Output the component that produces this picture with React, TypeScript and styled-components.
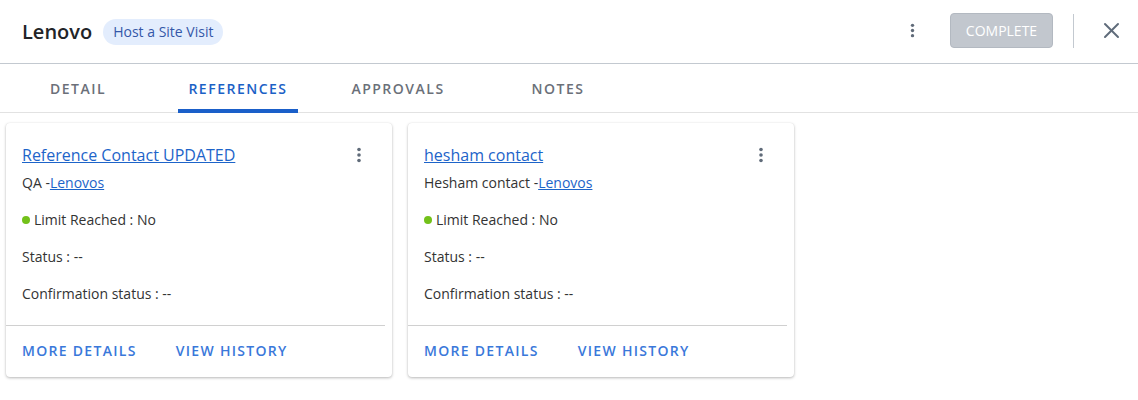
import React from 'react';
import styled, { createGlobalStyle } from 'styled-components';

interface Reference {
  name: string;
  role: string;
  company: string;
  limitReached: string;
  status: string;
  confirmation: string;
}

const references: Reference[] = [
  {
    name: 'Reference Contact UPDATED',
    role: 'QA',
    company: 'Lenovos',
    limitReached: 'No',
    status: '--',
    confirmation: '--',
  },
  {
    name: 'hesham contact',
    role: 'Hesham contact',
    company: 'Lenovos',
    limitReached: 'No',
    status: '--',
    confirmation: '--',
  },
];

const tabs = ['DETAIL', 'REFERENCES', 'APPROVALS', 'NOTES'];

const GlobalStyle = createGlobalStyle`
  html, body {
    margin: 0;
    padding: 0;
    background: #ffffff;
    font-family: 'Open Sans', 'Noto Sans', sans-serif;
    color: #333333;
  }
`;

function KebabIcon({ size = 16 }: { size?: number }): JSX.Element {
  return (
    <svg width={size} height={size} viewBox="0 0 16 16" fill="#606b79">
      <circle cx="8" cy="2.5" r="1.8" />
      <circle cx="8" cy="8" r="1.8" />
      <circle cx="8" cy="13.5" r="1.8" />
    </svg>
  );
}

function CloseIcon(): JSX.Element {
  return (
    <svg width="17" height="17" viewBox="0 0 17 17" stroke="#5f6b7a" strokeWidth="2" strokeLinecap="round">
      <line x1="2" y1="2" x2="15" y2="15" />
      <line x1="15" y1="2" x2="2" y2="15" />
    </svg>
  );
}

function ReferenceCard({ item }: { item: Reference }): JSX.Element {
  return (
    <Card>
      <CardBody>
        <TitleRow>
          <TitleLink href="#">{item.name}</TitleLink>
          <IconButton>
            <KebabIcon size={16} />
          </IconButton>
        </TitleRow>
        <Subtitle>
          {item.role} -<InlineLink href="#">{item.company}</InlineLink>
        </Subtitle>
        <InfoRow>
          <Dot />
          Limit Reached : {item.limitReached}
        </InfoRow>
        <InfoRow>Status : {item.status}</InfoRow>
        <InfoRow>Confirmation status : {item.confirmation}</InfoRow>
      </CardBody>
      <Divider />
      <CardFooter>
        <TextButton>MORE DETAILS</TextButton>
        <TextButton>VIEW HISTORY</TextButton>
      </CardFooter>
    </Card>
  );
}

export default function App(): JSX.Element {
  return (
    <Page>
      <GlobalStyle />
      <Header>
        <TitleGroup>
          <PageTitle>Lenovo</PageTitle>
          <Badge>Host a Site Visit</Badge>
        </TitleGroup>
        <Actions>
          <IconButton>
            <KebabIcon size={15} />
          </IconButton>
          <CompleteButton disabled>COMPLETE</CompleteButton>
          <VerticalRule />
          <IconButton>
            <CloseIcon />
          </IconButton>
        </Actions>
      </Header>
      <TabBar>
        {tabs.map((t) => (
          <Tab key={t} $active={t === 'REFERENCES'}>
            {t}
            {t === 'REFERENCES' && <Indicator />}
          </Tab>
        ))}
      </TabBar>
      <CardGrid>
        {references.map((r) => (
          <ReferenceCard key={r.name} item={r} />
        ))}
      </CardGrid>
    </Page>
  );
}

const Page = styled.div`
  width: 1138px;
  height: 400px;
  background: #ffffff;
`;

const Header = styled.header`
  height: 64px;
  box-sizing: border-box;
  border-bottom: 1px solid #c3c9d0;
  display: flex;
  align-items: center;
  justify-content: space-between;
  padding: 0 18px 0 22px;
`;

const TitleGroup = styled.div`
  display: flex;
  align-items: center;
  gap: 11px;
`;

const PageTitle = styled.h1`
  margin: 0;
  font-size: 20px;
  font-weight: 600;
  color: #222428;
`;

const Badge = styled.span`
  display: inline-flex;
  align-items: center;
  height: 26px;
  padding: 0 10px;
  border-radius: 13px;
  background: #e3edfd;
  color: #3457a8;
  font-size: 14px;
`;

const Actions = styled.div`
  display: flex;
  align-items: center;
  margin-top: -2px;
`;

const IconButton = styled.button`
  border: none;
  background: transparent;
  padding: 0;
  cursor: pointer;
  display: inline-flex;
  align-items: center;
  justify-content: center;
`;

const CompleteButton = styled.button`
  margin-left: 30px;
  width: 103px;
  height: 35px;
  border: 1px solid #b3b9c1;
  border-radius: 4px;
  background: #c2c7ce;
  color: #ffffff;
  font-family: 'Open Sans', sans-serif;
  font-size: 14px;
  padding: 0;
`;

const VerticalRule = styled.div`
  width: 1px;
  height: 34px;
  background: #c3c9d0;
  margin: 0 29px 0 20px;
`;

const TabBar = styled.nav`
  height: 49px;
  box-sizing: border-box;
  border-bottom: 1px solid #e2e2e2;
  display: flex;
  gap: 4px;
`;

const Tab = styled.div<{ $active?: boolean }>`
  position: relative;
  width: 156px;
  display: flex;
  align-items: center;
  justify-content: center;
  font-size: 14px;
  font-weight: 600;
  letter-spacing: 1.5px;
  color: ${(p) => (p.$active ? '#1b61c6' : '#6b7079')};
`;

const Indicator = styled.span`
  position: absolute;
  bottom: -1px;
  left: 50%;
  transform: translateX(-50%);
  width: 120px;
  height: 4px;
  background: #1a5fc9;
`;

const CardGrid = styled.div`
  display: flex;
  gap: 16px;
  padding: 10px 6px;
`;

const Card = styled.div`
  width: 386px;
  background: #ffffff;
  border-radius: 4px;
  box-shadow: 0 1px 3px rgba(0, 0, 0, 0.28), 0 0 1px rgba(0, 0, 0, 0.08);
`;

const CardBody = styled.div`
  padding: 20px 16px 21px 16px;
`;

const TitleRow = styled.div`
  display: flex;
  align-items: center;
  justify-content: space-between;
  height: 24px;
  padding-right: 9px;
`;

const TitleLink = styled.a`
  font-size: 16px;
  color: #1d64c9;
  text-decoration: underline;
`;

const Subtitle = styled.div`
  margin-top: 6px;
  font-size: 14px;
  line-height: 20px;
  color: #333333;
`;

const InlineLink = styled.a`
  color: #1d64c9;
  text-decoration: underline;
`;

const InfoRow = styled.div`
  margin-top: 17px;
  display: flex;
  align-items: center;
  font-size: 14px;
  line-height: 20px;
  color: #333333;
`;

const Dot = styled.span`
  width: 8px;
  height: 8px;
  border-radius: 50%;
  background: #73c11a;
  margin-right: 4px;
`;

const Divider = styled.div`
  height: 1px;
  background: #d0d0d0;
  margin-right: 7px;
`;

const CardFooter = styled.div`
  height: 51px;
  box-sizing: border-box;
  display: flex;
  align-items: center;
  gap: 39px;
  padding: 0 16px 2px 16px;
`;

const TextButton = styled.button`
  border: none;
  background: transparent;
  padding: 0;
  font-family: 'Open Sans', sans-serif;
  font-size: 14px;
  font-weight: 600;
  letter-spacing: 1.3px;
  color: #3a78da;
  cursor: pointer;
`;
